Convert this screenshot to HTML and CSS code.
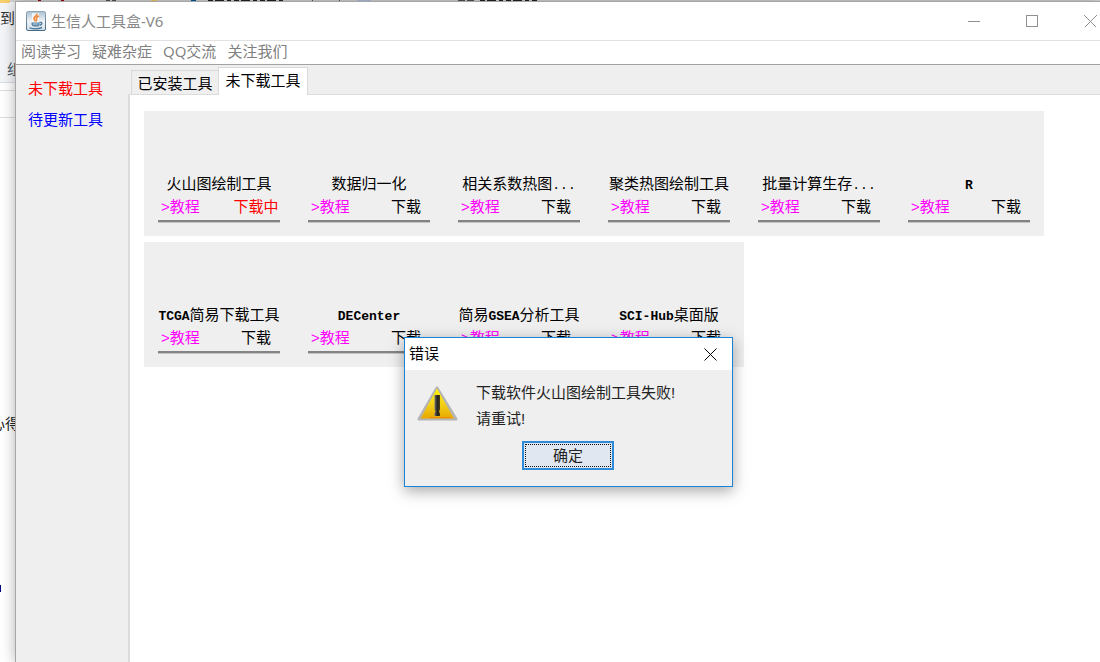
FILE: index.html
```
<!DOCTYPE html>
<html lang="zh-CN">
<head>
    <meta charset="utf-8">
    <title>生信人工具盒-V6</title>
    <link rel="stylesheet" href="styles.css">
</head>
<body>
    <!-- window behind the app -->
    <div class="backdrop">
        <svg class="backdrop-top" width="560" height="10">
            <path fill="#f5d06b" d="M0 0h10v3H0zM151 0h6v2h-6z"/>
            <path fill="#a00010" d="M38 0h3v2h-3zM61 0h3v2h-3z"/>
            <path fill="#555" d="M106 0h4v2h-4zM112 0h4v2h-4zM312 0h1v2h-1zM339 0h1v2h-1zM458 0h7v2h-7zM467 0h7v2h-7z"/>
            <path fill="#005a9e" d="M191 0h5v2h-5z"/>
            <path stroke="#222" stroke-width="2" stroke-dasharray="5 2 9 3 4 3" d="M208 1h77M480 1h58"/>
            <path fill="#b5c3e8" d="M357 0h14v2h-14z"/>
        </svg>
        <span class="behind behind-to">到</span>
        <span class="behind behind-group">组</span>
        <span class="behind behind-note">心得</span>
        <span class="behind-mark"></span>
    </div>

    <div class="window">
        <header class="titlebar">
            <svg class="app-icon" width="20" height="20" viewBox="0 0 20 20">
                <defs>
                    <linearGradient id="steel" x1="0" y1="0" x2="0" y2="1">
                        <stop offset="0" stop-color="#8fa8ba"/>
                        <stop offset="1" stop-color="#486a84"/>
                    </linearGradient>
                    <linearGradient id="paper" x1="0" y1="0" x2="0" y2="1">
                        <stop offset="0" stop-color="#a9c0d0"/>
                        <stop offset=".5" stop-color="#eef3f6"/>
                        <stop offset="1" stop-color="#d3e0e9"/>
                    </linearGradient>
                </defs>
                <rect x=".5" y=".5" width="19" height="19" rx="1.5" fill="url(#paper)" stroke="url(#steel)"/>
                <path d="M6 2h7v9H6z" fill="#fff" opacity=".7"/>
                <path d="M11 2.500c.8 2.200-3.500 3-3 5.300.2 1 1.200 1.500 1.500 2.700M13 5c-2 .8-3.200 1.700-2.500 3 .5.900.2 1.500-.4 2.200" fill="none" stroke="#ef8a3c" stroke-width="1.700"/>
                <path d="M5.500 11.500h8v1.500c0 2-1 2.500-2 2.500H8c-1.500 0-2.500-1-2.500-2.500z" fill="#5b87a8"/>
                <path d="M7 13h5" stroke="#c5d6e2"/>
                <path d="M3.500 16.800c4 1.200 9 1.200 12.500-.3M13.500 11.500c3-.8 3.200 2 .2 2.800" fill="none" stroke="#4f7b9c" stroke-width="1.400"/>
            </svg>
            <h1 class="title">生信人工具盒-V6</h1>
            <div class="captions">
                <button class="caption" aria-label="最小化"><svg width="13" height="13"><path d="M0 6.500h12"/></svg></button>
                <button class="caption" aria-label="最大化"><svg width="13" height="13"><path d="M.5.5h11v11h-11z"/></svg></button>
                <button class="caption" aria-label="关闭"><svg width="13" height="13"><path d="M.5.5l12 12M12.500.5l-12 12"/></svg></button>
            </div>
        </header>

        <nav class="menubar">
            <button>阅读学习</button>
            <button>疑难杂症</button>
            <button>QQ交流</button>
            <button>关注我们</button>
        </nav>

        <div class="workspace">
            <aside class="sidebar">
                <a class="missing" href="#missing">未下载工具</a>
                <a class="updates" href="#updates">待更新工具</a>
            </aside>

            <main class="content">
                <div class="tabs" role="tablist">
                    <button class="tab" role="tab" aria-selected="false">已安装工具</button>
                    <button class="tab active" role="tab" aria-selected="true">未下载工具</button>
                </div>
                <div class="panel" role="tabpanel">
                    <div class="tool-row">
                        <div class="tool">
                            <div class="name">火山图绘制工具</div>
                            <div class="actions"><a href="#guide">&gt;教程</a><button class="busy">下载中</button></div>
                        </div>
                        <div class="tool">
                            <div class="name">数据归一化</div>
                            <div class="actions"><a href="#guide">&gt;教程</a><button>下载</button></div>
                        </div>
                        <div class="tool">
                            <div class="name">相关系数热图<span class="dots">...</span></div>
                            <div class="actions"><a href="#guide">&gt;教程</a><button>下载</button></div>
                        </div>
                        <div class="tool">
                            <div class="name">聚类热图绘制工具</div>
                            <div class="actions"><a href="#guide">&gt;教程</a><button>下载</button></div>
                        </div>
                        <div class="tool">
                            <div class="name">批量计算生存<span class="dots">...</span></div>
                            <div class="actions"><a href="#guide">&gt;教程</a><button>下载</button></div>
                        </div>
                        <div class="tool">
                            <div class="name"><span class="latin">R</span></div>
                            <div class="actions"><a href="#guide">&gt;教程</a><button>下载</button></div>
                        </div>
                    </div>
                    <div class="tool-row">
                        <div class="tool">
                            <div class="name"><span class="latin">TCGA</span>简易下载工具</div>
                            <div class="actions"><a href="#guide">&gt;教程</a><button>下载</button></div>
                        </div>
                        <div class="tool">
                            <div class="name"><span class="latin">DECenter</span></div>
                            <div class="actions"><a href="#guide">&gt;教程</a><button>下载</button></div>
                        </div>
                        <div class="tool">
                            <div class="name">简易<span class="latin">GSEA</span>分析工具</div>
                            <div class="actions"><a href="#guide">&gt;教程</a><button>下载</button></div>
                        </div>
                        <div class="tool">
                            <div class="name"><span class="latin">SCI-Hub</span>桌面版</div>
                            <div class="actions"><a href="#guide">&gt;教程</a><button>下载</button></div>
                        </div>
                    </div>
                </div>
            </main>
        </div>
    </div>

    <div class="dialog" role="alertdialog" aria-labelledby="dialog-title">
        <div class="dialog-title">
            <span id="dialog-title">错误</span>
            <button class="dialog-close" aria-label="关闭"><svg width="13" height="13"><path d="M.5.5l12 12M12.500.5l-12 12"/></svg></button>
        </div>
        <div class="dialog-body">
            <div class="message">
                <svg width="42" height="36" viewBox="0 0 42 36">
                    <defs>
                        <linearGradient id="gold" x1="0" y1="0" x2="0" y2="1">
                            <stop offset="0" stop-color="#fff200"/>
                            <stop offset=".5" stop-color="#f3d21a"/>
                            <stop offset="1" stop-color="#e8a800"/>
                        </linearGradient>
                        <linearGradient id="bar" x1="0" y1="0" x2="1" y2="0">
                            <stop offset="0" stop-color="#777"/>
                            <stop offset=".5" stop-color="#222"/>
                            <stop offset="1" stop-color="#4a3c10"/>
                        </linearGradient>
                    </defs>
                    <path d="M20 2L2 33h37z" fill="#c4c4c4" stroke="#b4b4b4" stroke-width="3" stroke-linejoin="round"/>
                    <path d="M20 2.500L3.500 32.500h33.500z" fill="url(#gold)"/>
                    <path d="M17.500 9h5.500v14l-1 3 1 1v3h-5.500v-3l1-1-1-3z" fill="url(#bar)"/>
                    <path d="M12 31.500h22" stroke="#ef8a00"/>
                </svg>
                <p>下载软件火山图绘制工具失败!<br>请重试!</p>
            </div>
            <button class="ok">确定</button>
        </div>
    </div>
</body>
</html>
```

FILE: styles.css
```
* { box-sizing: border-box; }
body { margin: 0; height: 100vh; overflow: hidden; padding: 2px 0 0 16px; background: #fff; font: 15px/20px "Liberation Sans", "Noto Sans CJK SC", sans-serif; color: #000; }
button { margin: 0; padding: 0; border: 0; background: none; font: inherit; color: inherit; }
a { text-decoration: none; }
svg { display: block; }

/* window behind */
.backdrop { position: absolute; inset: 0; overflow: hidden; background: linear-gradient(#d6d6d6 2px, #f3f5f8 2px, #f3f5f8 82px, #dcdfe2 82px, #dcdfe2 83px, #fff 83px, #fff 90px, #ddd 90px, #ddd 91px, #fff 91px, #fff 117px, #ddd 117px, #ddd 118px, #fff 118px); }
.backdrop-top { position: absolute; top: 0; left: 0; }
.behind { position: absolute; white-space: nowrap; }
.behind-to { left: 0; top: 9px; color: #333; }
.behind-group { left: 7px; top: 60px; color: #456; }
.behind-note { left: -10px; top: 414px; color: #222; }
.behind-mark { position: absolute; left: 0; top: 585px; width: 1px; height: 7px; background: #000080; }

/* main window */
.window { position: relative; height: 100%; display: flex; flex-direction: column; background: #efefef; box-shadow: 0 0 0 1px #a5a5a5, 0 0 14px rgba(0, 0, 0, .35); }
.titlebar { display: flex; align-items: center; height: 39px; padding-left: 10px; background: #fff; border-bottom: 1px solid #e2e2e2; overflow: hidden; }
.title { margin: 0 0 0 5px; font: 15px/20px "Noto Sans", "Noto Sans CJK SC", sans-serif; color: #888; }
.captions { display: flex; margin: 0 -19px 0 auto; }
.caption { width: 58px; height: 38px; display: flex; align-items: center; justify-content: center; }
.caption svg, .dialog-close svg { fill: none; stroke: #909090; shape-rendering: crispEdges; }
.menubar { display: flex; align-items: flex-start; gap: 11px; height: 24px; padding-left: 5px; background: #fff; border-bottom: 1px solid #a2a2a2; color: #808080; }
.menubar button { font-family: "Open Sans", "Noto Sans CJK SC", sans-serif; }
.workspace { flex: 1; display: flex; min-height: 0; }
.sidebar { display: flex; flex-direction: column; gap: 11px; width: 112px; padding: 14px 12px; }
.missing { color: #f00; }
.updates { color: #00f; }

/* tabs */
.content { flex: 1; display: flex; flex-direction: column; min-width: 0; }
.tabs { display: flex; align-items: flex-end; height: 29px; padding: 0 3px; }
.tab { width: 87px; height: 24px; padding-top: 2px; border: 1px solid #d9d9d9; border-width: 1px 0 0 1px; }
.tab.active { position: relative; width: 90px; height: 28px; margin-bottom: -1px; padding: 0 0 1px; border-width: 1px 1px 0; background: #fff; }
.panel { flex: 1; padding: 16px 14px; border: solid #dcdcdc; border-width: 1px 0 0 2px; background: #fff; }

/* tools */
.tool-row { display: flex; width: fit-content; height: 125px; margin-bottom: 6px; background: #efefef; }
.tool { width: 150px; padding: 63px 14px 0 14px; }
.name { height: 23px; text-align: center; white-space: nowrap; }
.latin { font: bold 13px/20px "Liberation Mono", monospace; }
.dots { font: 13px/20px "Liberation Mono", monospace; }
.actions { display: flex; justify-content: space-between; height: 25px; border-bottom: 2px solid #848484; box-shadow: 0 1px #c4c4c4; }
.actions a { width: 45px; text-align: center; color: #f0f; }
.actions button { width: 48px; height: 20px; }
.actions .busy { color: #f00; }

/* error dialog */
.dialog { position: absolute; left: 404px; top: 337px; width: 329px; border: 1px solid #1883d7; background: #efefef; box-shadow: 0 4px 14px rgba(0, 0, 0, .35); }
.dialog-title { display: flex; align-items: center; justify-content: space-between; height: 32px; padding-left: 4px; background: #fff; }
.dialog-close { width: 43px; height: 32px; display: flex; align-items: center; justify-content: center; }
.dialog-close svg { stroke: #000; shape-rendering: auto; }
.dialog-body { padding: 10px 12px 16px; color: #222; }
.message { display: flex; gap: 17px; }
.message svg { margin-top: 6px; }
.message p { margin: 0; line-height: 26px; }
.ok { display: block; width: 92px; height: 29px; margin: 9px auto 0 105px; border: 2px solid #2f8bd8; background: #e1e7f0; outline: 1px dotted #111; outline-offset: -4px; }
```
